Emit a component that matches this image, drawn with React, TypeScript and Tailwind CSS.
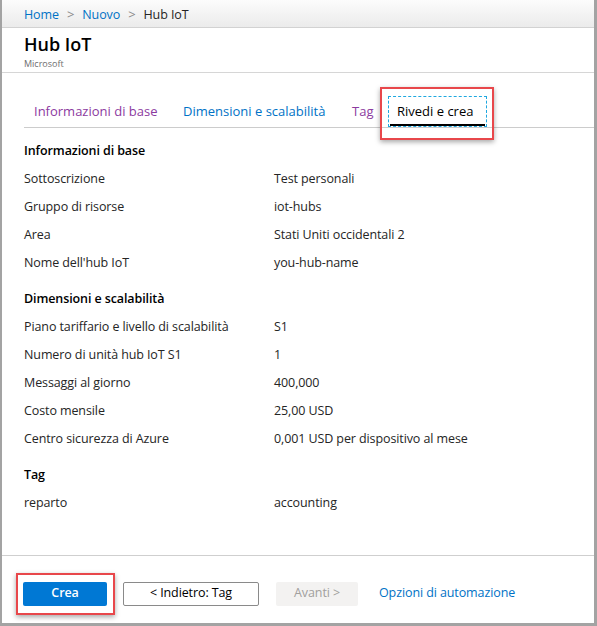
import React from 'react'

const sections = [
  {
    title: 'Informazioni di base',
    rows: [
      ['Sottoscrizione', 'Test personali'],
      ['Gruppo di risorse', 'iot-hubs'],
      ['Area', 'Stati Uniti occidentali 2'],
      ["Nome dell'hub IoT", 'you-hub-name'],
    ],
  },
  {
    title: 'Dimensioni e scalabilità',
    rows: [
      ['Piano tariffario e livello di scalabilità', 'S1'],
      ['Numero di unità hub IoT S1', '1'],
      ['Messaggi al giorno', '400,000'],
      ['Costo mensile', '25,00 USD'],
      ['Centro sicurezza di Azure', '0,001 USD per dispositivo al mese'],
    ],
  },
  {
    title: 'Tag',
    rows: [['reparto', 'accounting']],
  },
]

function Highlight({ className }: { className: string }) {
  return (
    <span
      className={`pointer-events-none absolute border-2 border-[#e8474b] shadow-[0_2px_5px_rgba(0,0,0,0.35)] ${className}`}
    />
  )
}

export default function App() {
  return (
    <div
      className="w-[597px] h-[626px] bg-white border-l-2 border-r-[3px] border-b-[3px] border-[#a3a3a3] flex flex-col text-[12.5px] tracking-[-0.1px] text-[#252525]"
      style={{ fontFamily: '"Open Sans", "Noto Sans", sans-serif' }}
    >
      {/* breadcrumb */}
      <div className="h-[28px] shrink-0 bg-gradient-to-b from-[#fcfcfc] to-[#ebebeb] border-b border-[#d2d2d2] flex items-center pl-[22px] pt-[3px] gap-[8px]">
        <span className="text-[#0072c6]">Home</span>
        <span className="text-[#8a8a8a] text-[13px]">&gt;</span>
        <span className="text-[#0072c6]">Nuovo</span>
        <span className="text-[#8a8a8a] text-[13px]">&gt;</span>
        <span>Hub IoT</span>
      </div>

      {/* header */}
      <div className="h-[45px] shrink-0 border-b border-[#d6d6d6] pl-[22px] pt-[4px]">
        <div className="text-[18px] font-semibold leading-[24px] text-black tracking-normal">Hub IoT</div>
        <div className="text-[9px] leading-[12px] text-[#6e6e6e] mt-[2px] tracking-normal">Microsoft</div>
      </div>

      {/* body */}
      <div className="flex-1 pl-[22px]">
        <div className="mt-[23px] h-[32px] flex border-b border-[#cccccc] text-[13px] tracking-normal">
          <div className="w-[149px] pl-[10px] pt-[1px] flex items-center text-[#8c3aa0]">Informazioni di base</div>
          <div className="w-[169px] pl-[10px] pt-[1px] flex items-center text-[#0072c6]">Dimensioni e scalabilità</div>
          <div className="w-[46px] pl-[10px] pt-[1px] flex items-center text-[#8c3aa0]">Tag</div>
          <div className="relative w-[99px] border border-dashed border-[#1fa8e0] flex items-center pl-[8px] pt-[1px] text-black">
            Rivedi e crea
            <span className="absolute left-[1px] right-[1px] bottom-0 h-[2px] bg-black" />
            <Highlight className="-left-[9px] -right-[8px] -top-[10px] -bottom-[14px]" />
          </div>
        </div>

        <div className="mt-[9px]">
          {sections.map((s, i) => (
            <div key={s.title} className={i > 0 ? 'mt-[8px]' : ''}>
              <div className="h-[28px] flex items-center font-semibold text-black">{s.title}</div>
              {s.rows.map(([k, v]) => (
                <div key={k} className="h-[28px] flex items-center">
                  <div className="w-[250px] shrink-0">{k}</div>
                  <div>{v}</div>
                </div>
              ))}
            </div>
          ))}
        </div>
      </div>

      {/* footer */}
      <div className="h-[68px] shrink-0 border-t border-[#cfcfcf] flex items-center pl-[21px] pt-[8px]">
        <div className="relative">
          <button className="w-[84px] h-[24px] bg-[#0078d4] text-white font-semibold rounded-[2px]">Crea</button>
          <Highlight className="-left-[7px] -right-[8px] -top-[9px] -bottom-[9px]" />
        </div>
        <button className="ml-[16px] w-[136px] h-[24px] border border-[#8a8a8a] rounded-[2px] text-black">
          &lt; Indietro: Tag
        </button>
        <button className="ml-[17px] w-[82px] h-[24px] bg-[#f3f2f1] rounded-[2px] text-[#a19f9d]">Avanti &gt;</button>
        <span className="ml-[21px] text-[#0072c6]">Opzioni di automazione</span>
      </div>
    </div>
  )
}
